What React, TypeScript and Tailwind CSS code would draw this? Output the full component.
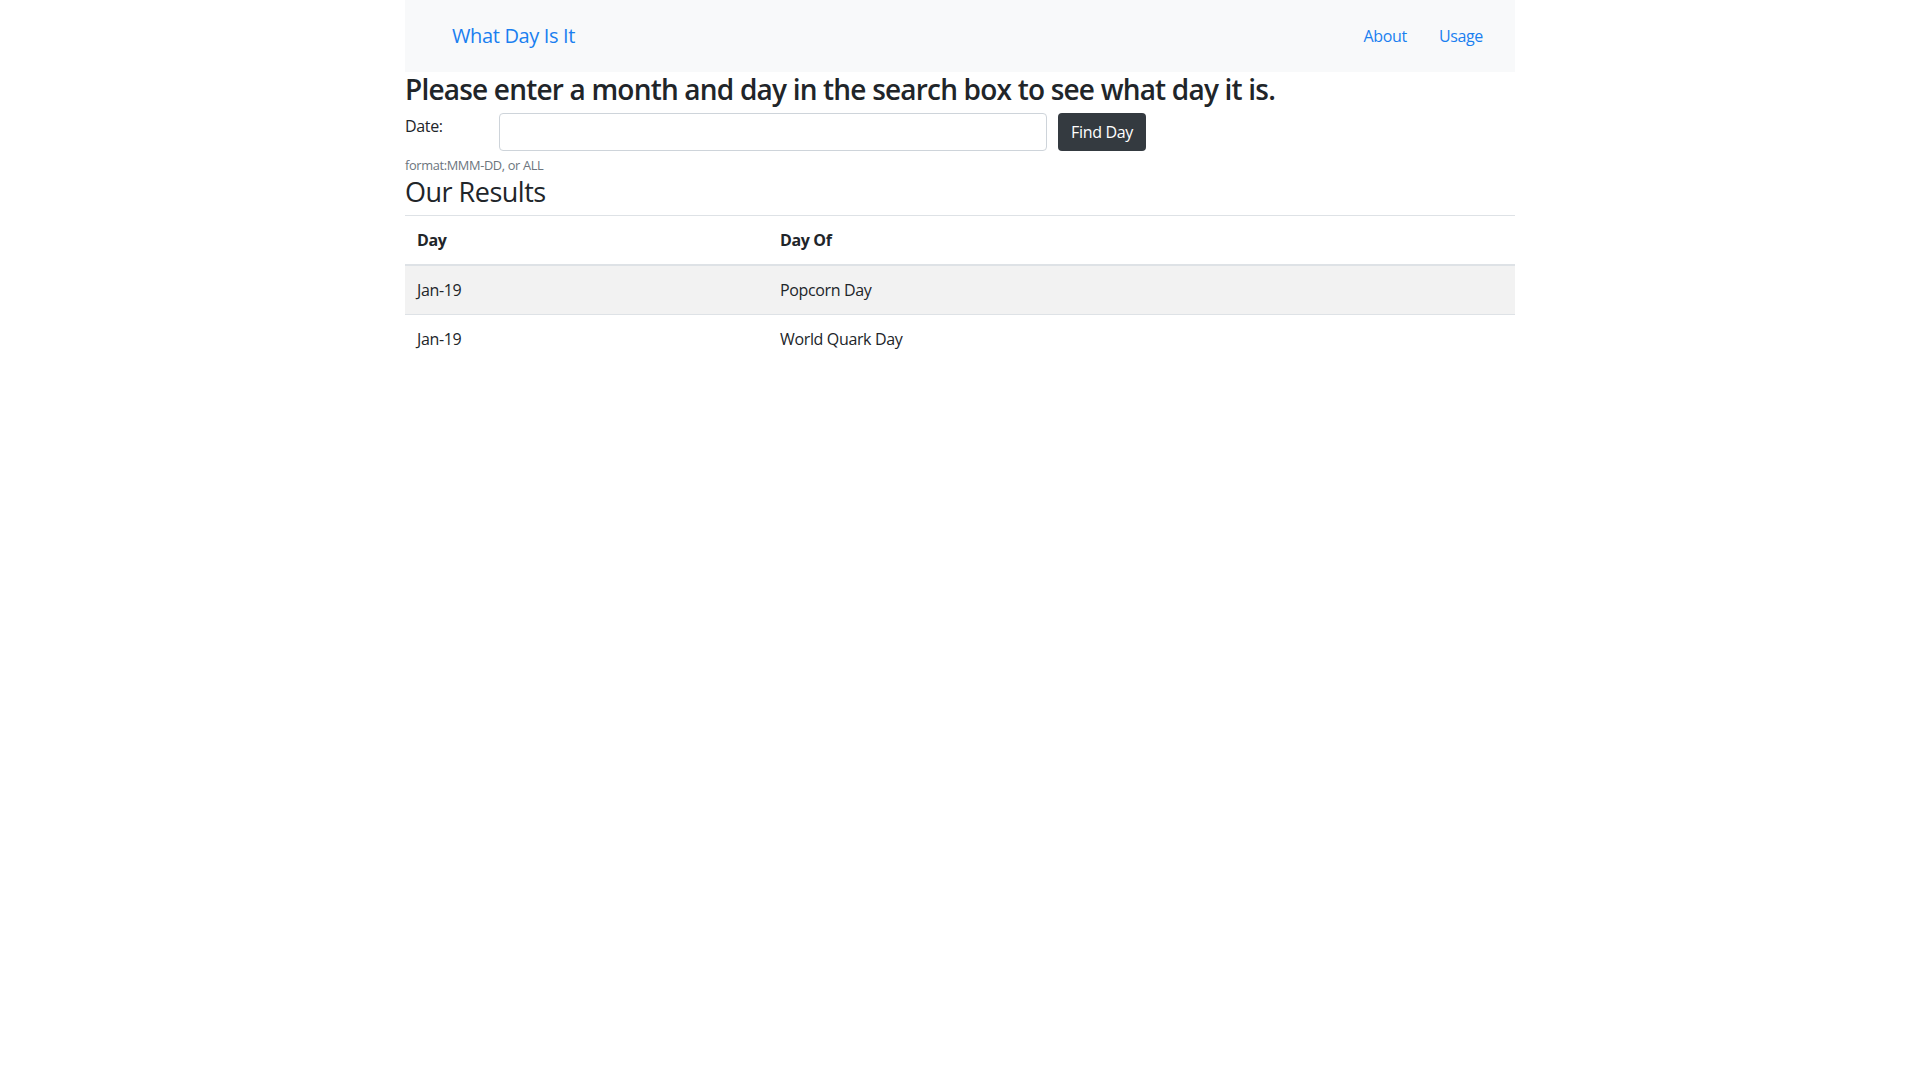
import React from "react";

const font = { fontFamily: '"Open Sans", "Noto Sans", "Liberation Sans", sans-serif' };

export default function App() {
  const rows = [
    { day: "Jan-19", of: "Popcorn Day" },
    { day: "Jan-19", of: "World Quark Day" },
  ];
  return (
    <div className="min-h-screen w-full bg-white text-[#212529] tracking-[-0.35px]" style={font}>
      <div className="mx-auto w-[1110px]">
        <nav className="flex h-[72px] items-center justify-between bg-[#f8f9fa] pl-[47px] pr-[32px]">
          <a href="#" className="text-[20px] leading-[30px] text-[#1a7ff0]">
            What Day Is It
          </a>
          <div className="flex items-center gap-[32px] text-[16px] text-[#1a7ff0]">
            <a href="#">About</a>
            <a href="#">Usage</a>
          </div>
        </nav>

        <h3 className="mb-[7px] text-[28px] font-semibold leading-[34px] tracking-[-0.8px]">
          Please enter a month and day in the search box to see what day it is.
        </h3>

        <div className="flex items-start">
          <label className="mt-[1px] w-[94px] text-[16px] leading-[24px]">Date:</label>
          <input
            type="text"
            className="h-[38px] w-[548px] rounded-[4px] border border-[#ced4da] bg-white px-3 outline-none"
          />
          <button className="ml-[11px] h-[38px] w-[88px] rounded-[4px] bg-[#343a40] text-[16px] text-white">
            Find Day
          </button>
        </div>

        <div className="mt-[5px] text-[12.8px] leading-[19px] text-[#6c757d]">format:MMM-DD, or ALL</div>

        <h3 className="mb-[8px] mt-[1px] text-[27px] font-medium leading-[31px] tracking-[-0.5px]">Our Results</h3>

        <table className="w-full border-collapse text-[16px]">
          <thead>
            <tr>
              <th className="w-[363px] border-t border-b-2 border-[#dee2e6] px-3 py-3 text-left font-bold leading-[24px]">
                Day
              </th>
              <th className="border-t border-b-2 border-[#dee2e6] px-3 py-3 text-left font-bold leading-[24px]">
                Day Of
              </th>
            </tr>
          </thead>
          <tbody>
            {rows.map((r, i) => (
              <tr key={i} className={i % 2 === 0 ? "bg-[#f2f2f2]" : ""}>
                <td className="border-t border-[#dee2e6] px-3 py-3 leading-[24px]">{r.day}</td>
                <td className="border-t border-[#dee2e6] px-3 py-3 leading-[24px]">{r.of}</td>
              </tr>
            ))}
          </tbody>
        </table>
      </div>
    </div>
  );
}
